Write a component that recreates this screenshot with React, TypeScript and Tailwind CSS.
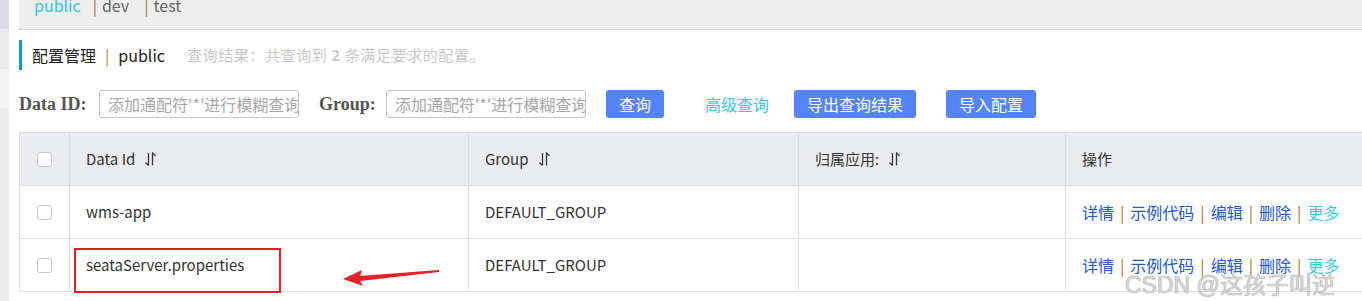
import React from "react";

const SortIcon = () => (
    <svg width="11" height="15" viewBox="0 0 11 15" className="inline-block ml-[10px] align-[-2px]">
        <path d="M3.5 1 V13.5 M0.5 10.5 L3.5 13.5" stroke="#3a3434" strokeWidth="1.3" fill="none" />
        <path d="M7.5 13.5 V1 L10.5 4" stroke="#3a3a4a" strokeWidth="1.3" fill="none" />
    </svg>
);

const Sep = ({ className = "mx-[6px]" }: { className?: string }) => (
    <span className={"text-[#b0703a] " + className}>|</span>
);

const rows = [
    { id: "wms-app", group: "DEFAULT_GROUP" },
    { id: "seataServer.properties", group: "DEFAULT_GROUP" },
];

const Check = () => (
    <div className="w-[15px] h-[15px] rounded-[3px] border border-[#c4c6cf] bg-white" />
);

export default function App() {
    return (
        <div className="relative flex w-[1362px] h-[301px] overflow-hidden bg-white text-[#333] font-['Noto_Sans_CJK_SC','Noto_Sans',sans-serif]">
            <aside className="w-[9px] shrink-0 flex flex-col">
                <div className="h-[29px] bg-[#dadde3]" />
                <div className="h-[40px] bg-[#e9ebef]" />
                <div className="h-[39px] bg-[#f3f4f6]" />
                <div className="flex-1 bg-[#e9ebef]" />
            </aside>

            <main className="flex-1 min-w-0 pl-[10px]">
                {/* namespace tabs */}
                <div className="h-[30px] bg-[#eeeeee] border-b border-[#cfcfcf] overflow-hidden pl-[15px]">
                    <div className="flex items-center text-[16px] leading-[16px] -mt-[3px]">
                        <span className="text-[#33c5e6]">public</span>
                        <Sep className="ml-[12px] mr-[5px]" />
                        <span className="text-[#666]">dev</span>
                        <Sep className="ml-[15px] mr-[5px]" />
                        <span className="text-[#666]">test</span>
                    </div>
                </div>

                {/* title */}
                <div className="mt-[10px] h-[30px] flex items-center border-l-[3px] border-[#0e9ad0] pl-[10px]">
                    <span className="text-[16px] text-[#222]">配置管理</span>
                    <span className="text-[16px] text-[#c08038] mx-[9px]">|</span>
                    <span className="text-[16px] text-[#222]">public</span>
                    <span className="ml-[22px] text-[15px] tracking-[0.6px] text-[#c9c9c9]">
                        查询结果：共查询到 <b className="font-bold">2</b> 条满足要求的配置。
                    </span>
                </div>

                {/* search */}
                <div className="mt-[20px] h-[28px] flex items-center">
                    <span className="font-['Liberation_Serif',serif] font-bold text-[18px] text-[#555] w-[80px]">Data ID:</span>
                    <div className="w-[200px] h-[28px] border border-[#c4c6cf] rounded-[3px] px-[8px] flex items-center overflow-hidden whitespace-nowrap text-[16px] text-[#a8a8a8]">
                        添加通配符'*'进行模糊查询
                    </div>
                    <span className="ml-[20px] font-['Liberation_Serif',serif] font-bold text-[18px] text-[#555] w-[67px]">Group:</span>
                    <div className="w-[200px] h-[28px] border border-[#c4c6cf] rounded-[3px] px-[8px] flex items-center overflow-hidden whitespace-nowrap text-[16px] text-[#a8a8a8]">
                        添加通配符'*'进行模糊查询
                    </div>
                    <button className="ml-[20px] w-[58px] h-[28px] rounded-[3px] bg-[#5584ff] text-white text-[16px]">查询</button>
                    <span className="ml-[41px] text-[16px] text-[#33cde5]">高级查询</span>
                    <button className="ml-[25px] w-[122px] h-[28px] rounded-[3px] bg-[#5584ff] text-white text-[16px]">导出查询结果</button>
                    <button className="ml-[30px] w-[90px] h-[28px] rounded-[3px] bg-[#5584ff] text-white text-[16px]">导入配置</button>
                </div>

                {/* table */}
                <div className="mt-[14px] border-l border-t border-[#dcdee3] text-[15px]">
                    <div className="grid grid-cols-[50px_399px_330px_267px_1fr] h-[53px] bg-[#ebecf0] border-b border-[#dcdee3]">
                        <div className="flex items-center justify-center border-r border-[#dcdee3]"><Check /></div>
                        <div className="flex items-center pl-[16px] border-r border-[#dcdee3]">Data Id<SortIcon /></div>
                        <div className="flex items-center pl-[16px] border-r border-[#dcdee3]">Group<SortIcon /></div>
                        <div className="flex items-center pl-[16px] border-r border-[#dcdee3]">归属应用:<SortIcon /></div>
                        <div className="flex items-center pl-[16px]">操作</div>
                    </div>
                    {rows.map((r) => (
                        <div key={r.id} className="grid grid-cols-[50px_399px_330px_267px_1fr] h-[53px] border-b border-[#dcdee3]">
                            <div className="flex items-center justify-center border-r border-[#dcdee3]"><Check /></div>
                            <div className="flex items-center pl-[16px] border-r border-[#dcdee3]">{r.id}</div>
                            <div className="flex items-center pl-[16px] border-r border-[#dcdee3]">{r.group}</div>
                            <div className="border-r border-[#dcdee3]" />
                            <div className="flex items-center pl-[16px] text-[16px] text-[#2458d8] whitespace-nowrap">
                                <span>详情</span><Sep />
                                <span>示例代码</span><Sep />
                                <span>编辑</span><Sep />
                                <span>删除</span><Sep />
                                <span className="text-[#33cde5]">更多</span>
                            </div>
                        </div>
                    ))}
                </div>
            </main>

            {/* annotation */}
            <div className="absolute left-[74px] top-[248px] w-[207px] h-[45px] border-2 border-[#e51c23]" />
            <svg className="absolute left-[340px] top-[264px]" width="102" height="22" viewBox="0 0 102 22">
                <path d="M3 15 L22 6 L20 12 L99 6 L99 8 L20 17 L23 22 Z" fill="#e8202a" />
            </svg>
            <div className="absolute left-[1125px] top-[266px] text-[23px] text-white/60 font-['Liberation_Sans',sans-serif] [text-shadow:0_0_1px_#999,0_0_1px_#999]">
                CSDN @<span className="font-['Noto_Sans_CJK_SC',sans-serif]">这孩子叫逆</span>
            </div>
        </div>
    );
}
